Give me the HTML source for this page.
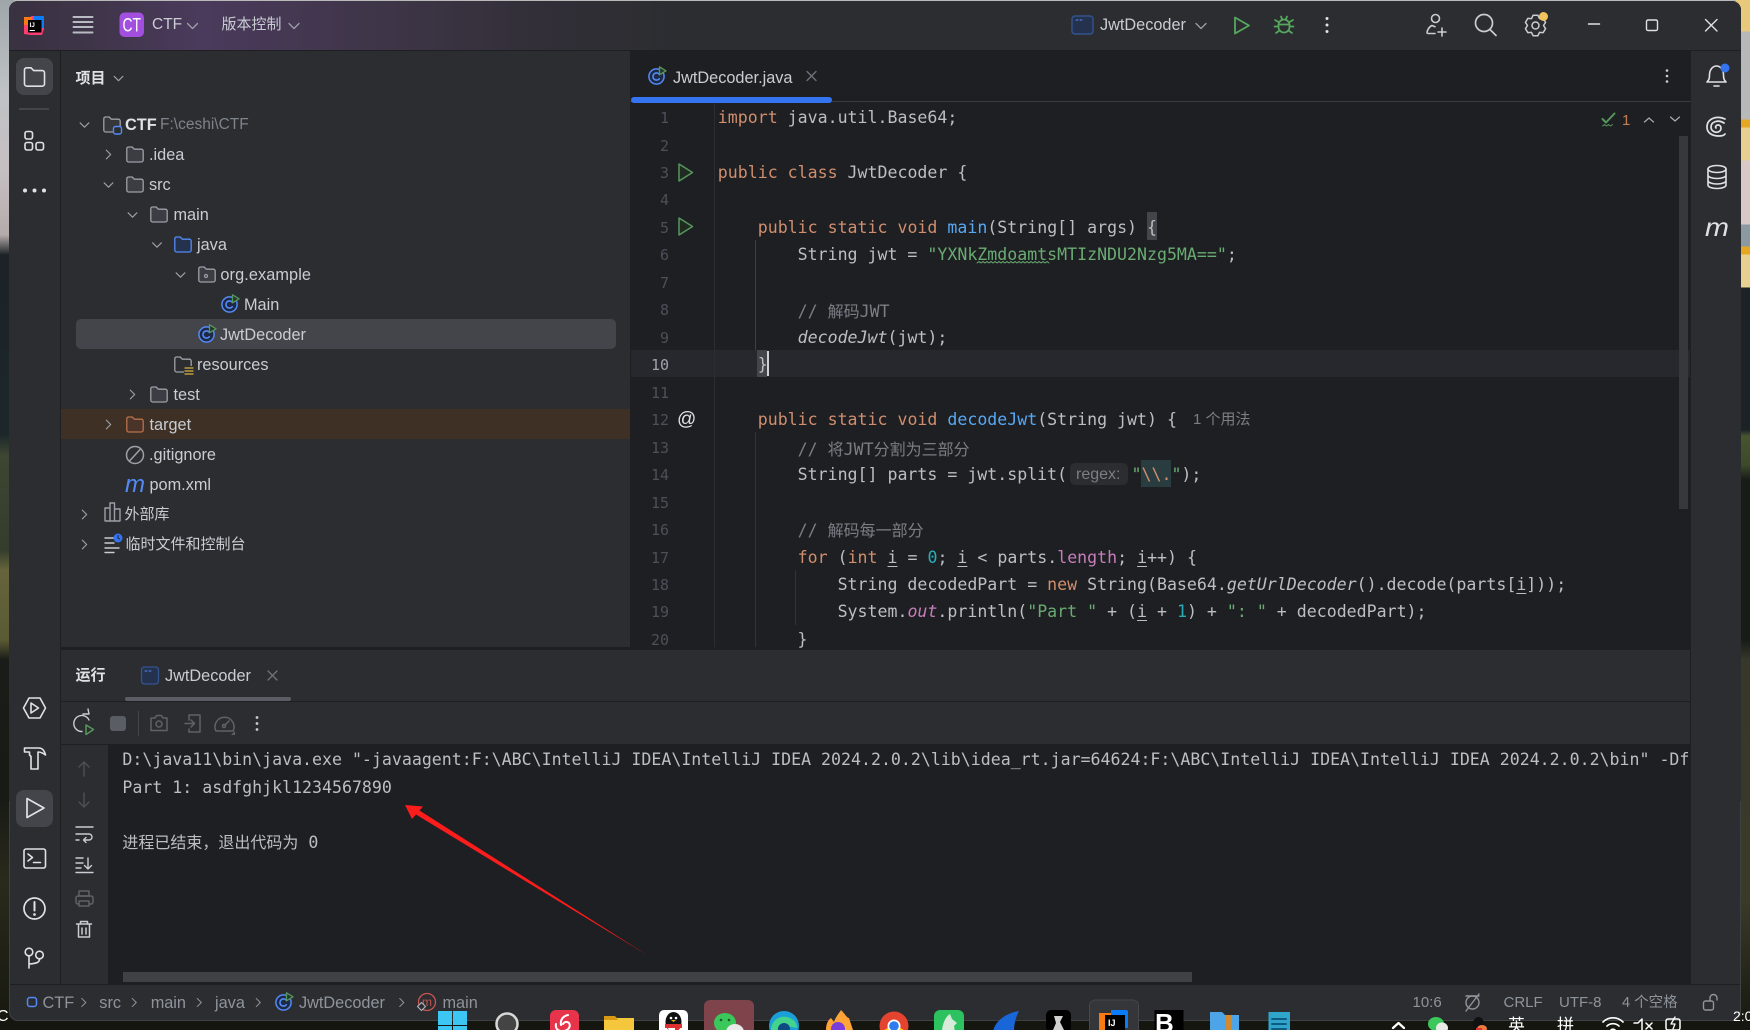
<!DOCTYPE html>
<html lang="zh"><head><meta charset="utf-8"><title>CTF</title>
<style>
html,body{margin:0;padding:0;width:1750px;height:1030px;overflow:hidden;background:#15160f}
body{position:relative;font-family:"Liberation Sans","Noto Sans CJK SC",sans-serif;color:#bcbec4}
.bg{position:absolute}
#win{position:absolute;left:0;top:0;width:1750px;height:1030px;clip-path:inset(1px 9px 9px 9px round 9px);background:#2b2d30}
.r{position:absolute}
.t{position:absolute;white-space:pre;line-height:22px;margin-top:-10.5px;font-size:16.3px;color:#c9ccd3}
.g{color:#7f838b}
.b{color:#8f949c}
.m{position:absolute;white-space:pre;line-height:24px;margin-top:-11px;font-family:"DejaVu Sans Mono","Liberation Mono","Noto Sans CJK SC",monospace;font-size:16.58px;color:#bcbec4}
.ln{position:absolute;left:629px;width:40px;text-align:right;line-height:22px;margin-top:-10px;font-family:"DejaVu Sans Mono","Liberation Mono",monospace;font-size:15px;color:#4b5059}
.k{color:#cf8e6d}.q{color:#6aab73}.c{color:#7a7e85}.f{color:#56a8f5}.n{color:#2aacb8}.p{color:#c77dbb}
.z{font-size:16px;font-family:"Noto Sans CJK SC",sans-serif}
i{font-style:italic}
u{text-decoration:underline;text-underline-offset:3px}
svg{position:absolute;left:0;top:0;overflow:visible}
</style></head><body>
<div class="bg" style="left:0;top:0;width:1750px;height:2px;background:#b9b9b9"></div>
<div class="bg" style="left:0;top:0;width:14px;height:1030px;background:linear-gradient(180deg,#9fa6aa 0,#bfc2c5 90px,#c6bfc2 170px,#b4abab 235px,#1c2226 255px,#1d272a 435px,#3d4632 455px,#343d2c 550px,#65643c 570px,#5a5a34 640px,#191c18 660px,#181a15 800px,#2a2a1c 880px,#16170f 1030px)"></div>
<div class="bg" style="left:1736px;top:0;width:14px;height:1030px;background:linear-gradient(180deg,#e8c87a 0,#e8c87a 31px,#b8b8b8 32px,#b8b8b8 119px,#e6a722 120px,#e6a722 127px,#e8d090 128px,#e8d090 160px,#d9c8c8 161px,#d9c8c8 224px,#8a9aa0 225px,#8a9aa0 246px,#e6a722 247px,#e6a722 254px,#e8d090 255px,#e8d090 287px,#1c2226 288px,#1c2226 430px,#46552e 436px,#3c4a2a 465px,#181c18 480px,#181c18 640px,#38382a 660px,#3a3a28 900px,#16170f 1030px)"></div>
<div class="bg" style="left:0;top:1018px;width:1750px;height:12px;background:#15160f"></div>

<div id="win">
<!-- panels -->
<div class="r" style="left:0;top:0;width:1750px;height:50px;background:linear-gradient(90deg,#38313f 0,#3f3549 90px,#4a3a5c 200px,#3d3546 400px,#302e36 560px,#2b2d30 700px)"></div>
<div class="r" style="left:0;top:50px;width:1750px;height:1px;background:#1e1f22"></div>
<div class="r" style="left:60px;top:51px;width:1px;height:934px;background:#1e1f22"></div>
<div class="r" style="left:630px;top:51px;width:1061px;height:597px;background:#1e1f22"></div>
<div class="r" style="left:60px;top:647px;width:1631px;height:3px;background:#1e1f22"></div>
<div class="r" style="left:1690px;top:51px;width:1px;height:934px;background:#1e1f22"></div>
<!-- tree selection -->
<div class="r" style="left:75.5px;top:319px;width:540px;height:30px;background:#43454a;border-radius:5px"></div>
<div class="r" style="left:61px;top:409px;width:569px;height:30px;background:#3e3024"></div>
<!-- left strip btn -->
<div class="r" style="left:15.5px;top:58px;width:37px;height:37px;background:#43454a;border-radius:8px"></div>
<div class="r" style="left:19px;top:107.5px;width:30px;height:2px;background:#43454a"></div>
<div class="r" style="left:15.5px;top:790px;width:37px;height:37px;background:#43454a;border-radius:8px"></div>
<!-- editor furniture -->
<div class="r" style="left:630px;top:101px;width:1061px;height:1px;background:#393b40"></div>
<div class="r" style="left:631px;top:97px;width:201px;height:6px;background:#3574f0;border-radius:3px"></div>
<div class="r" style="left:631px;top:350px;width:1059px;height:27px;background:#26282e"></div>
<div class="r" style="left:714px;top:103px;width:1px;height:544px;background:#2b2d30"></div>
<div class="r" style="left:755px;top:240px;width:1px;height:110px;background:#3f4146"></div>
<div class="r" style="left:755px;top:432px;width:1px;height:215px;background:#313338"></div>
<div class="r" style="left:795px;top:570px;width:1px;height:55px;background:#313338"></div>
<div class="r" style="left:1147px;top:212px;width:10px;height:28px;background:#43454a"></div>
<div class="r" style="left:757px;top:350px;width:10px;height:27px;background:#43454a"></div>
<div class="r" style="left:766.5px;top:351px;width:2px;height:25px;background:#ced0d6"></div>
<div class="r" style="left:1141px;top:460px;width:30px;height:27px;background:#293c40"></div>
<div class="r" style="left:1070px;top:463px;width:58px;height:22px;background:#2b2d30;border-radius:5px"></div>
<div class="r" style="left:1678.5px;top:136px;width:9.5px;height:373px;background:#37383b"></div>
<!-- run panel -->
<div class="r" style="left:61px;top:700.5px;width:1629px;height:1px;background:#1e1f22"></div>
<div class="r" style="left:125px;top:697px;width:166px;height:4px;background:#5a5d63;border-radius:2px"></div>
<div class="r" style="left:138px;top:711px;width:1px;height:25px;background:#43454a"></div>
<div class="r" style="left:61px;top:744px;width:1629px;height:1px;background:#1e1f22"></div>
<div class="r" style="left:108px;top:745px;width:1582px;height:239px;background:#1e1f22"></div>
<div class="r" style="left:123px;top:972px;width:1069px;height:10px;background:#404144"></div>
<div class="r" style="left:9px;top:984px;width:1732px;height:1px;background:#1e1f22"></div>
<div class="r" style="left:110px;top:716px;width:16px;height:15px;background:#5a5d63;border-radius:3px"></div>

<!-- title texts -->
<div class="t" style="left:152px;top:24.5px;font-size:15.5px">CTF</div>
<div class="t" style="left:221.5px;top:24.5px;font-size:15px">版本控制</div>
<div class="t" style="left:1100px;top:24.5px">JwtDecoder</div>
<div class="t" style="left:75.5px;top:78.5px;font-size:15px;font-weight:bold;color:#dfe1e5">项目</div>
<!-- tree -->
<div class="t" style="left:125px;top:124.7px;font-weight:bold;color:#dfe1e5">CTF</div>
<div class="t g" style="left:160px;top:124.7px;font-size:15.5px">F:\ceshi\CTF</div>
<div class="t" style="left:149px;top:154.7px">.idea</div>
<div class="t" style="left:149px;top:184.7px">src</div>
<div class="t" style="left:173.5px;top:214.7px">main</div>
<div class="t" style="left:197px;top:244.7px">java</div>
<div class="t" style="left:220.4px;top:274.7px;letter-spacing:.1px">org.example</div>
<div class="t" style="left:244px;top:304.7px">Main</div>
<div class="t" style="left:220px;top:334.7px">JwtDecoder</div>
<div class="t" style="left:197px;top:364.7px">resources</div>
<div class="t" style="left:173.5px;top:394.7px">test</div>
<div class="t" style="left:149.5px;top:424.7px">target</div>
<div class="t" style="left:149px;top:454.7px">.gitignore</div>
<div class="t" style="left:149.5px;top:484.7px">pom.xml</div>
<div class="t" style="left:124.5px;top:514.5px;font-size:15px">外部库</div>
<div class="t" style="left:125.5px;top:544.5px;font-size:15px">临时文件和控制台</div>
<!-- tab -->
<div class="t" style="left:673px;top:77.5px">JwtDecoder.java</div>
<div class="t" style="left:75.5px;top:675.5px;font-size:15px;font-weight:bold;color:#dfe1e5">运行</div>
<div class="t" style="left:165px;top:675.5px">JwtDecoder</div>

<!-- line numbers -->
<div class="ln" style="top:117px">1</div><div class="ln" style="top:144.5px">2</div><div class="ln" style="top:172px">3</div><div class="ln" style="top:199.4px">4</div><div class="ln" style="top:226.9px">5</div><div class="ln" style="top:254.4px">6</div><div class="ln" style="top:281.8px">7</div><div class="ln" style="top:309.3px">8</div><div class="ln" style="top:336.8px">9</div><div class="ln" style="top:364.2px;color:#a1a3ab">10</div><div class="ln" style="top:391.7px">11</div><div class="ln" style="top:419.2px">12</div><div class="ln" style="top:446.6px">13</div><div class="ln" style="top:474.1px">14</div><div class="ln" style="top:501.6px">15</div><div class="ln" style="top:529px">16</div><div class="ln" style="top:556.5px">17</div><div class="ln" style="top:584px">18</div><div class="ln" style="top:611.4px">19</div>
<div class="r" style="left:630px;top:101px;width:1061px;height:547px;overflow:hidden">
<div class="ln" style="left:-1px;top:538.3px">20</div>
<div class="m" style="left:127.5px;top:538.3px"><span style="visibility:hidden">    </span>}</div>
</div>
<!-- code -->
<div class="m" style="left:717.8px;top:117px"><span class="k">import</span> java.util.Base64;</div>
<div class="m" style="left:717.8px;top:172px"><span class="k">public class</span> JwtDecoder {</div>
<div class="m" style="left:717.8px;top:226.9px">    <span class="k">public static void</span> <span class="f">main</span>(String[] args) {</div>
<div class="m" style="left:717.8px;top:254.4px">        String jwt = <span class="q">"YXNkZmdoamtsMTIzNDU2Nzg5MA=="</span>;</div>
<div class="m c" style="left:717.8px;top:308.5px">        // <span class="z">解码</span>JWT</div>
<div class="m" style="left:717.8px;top:336.8px">        <i>decodeJwt</i>(jwt);</div>
<div class="m" style="left:717.8px;top:364.2px">    }</div>
<div class="m" style="left:717.8px;top:419.2px">    <span class="k">public static void</span> <span class="f">decodeJwt</span>(String jwt) {</div>
<div class="t c" style="left:1193px;top:419.2px;font-size:15px;color:#7a7e85">1 个用法</div>
<div class="m c" style="left:717.8px;top:446.6px">        // <span class="z">将</span>JWT<span class="z">分割为三部分</span></div>
<div class="m" style="left:717.8px;top:474.1px">        String[] parts = jwt.split(</div>
<div class="t" style="left:1076px;top:474.1px;font-size:16px;color:#7a7e85">regex:</div>
<div class="m" style="left:1131.5px;top:474.1px"><span class="q">"</span><span class="k">\\.</span><span class="q">"</span>);</div>
<div class="m c" style="left:717.8px;top:528px">        // <span class="z">解码每一部分</span></div>
<div class="m" style="left:717.8px;top:556.5px">        <span class="k">for</span> (<span class="k">int</span> <u>i</u> = <span class="n">0</span>; <u>i</u> &lt; parts.<span class="p">length</span>; <u>i</u>++) {</div>
<div class="m" style="left:717.8px;top:584px">            String decodedPart = <span class="k">new</span> String(Base64.<i>getUrlDecoder</i>().decode(parts[<u>i</u>]));</div>
<div class="m" style="left:717.8px;top:611.4px">            System.<i class="p">out</i>.println(<span class="q">"Part "</span> + (<u>i</u> + <span class="n">1</span>) + <span class="q">": "</span> + decodedPart);</div>
<!-- console -->
<div class="r" style="left:108px;top:745px;width:1582px;height:120px;overflow:hidden">
<div class="m" style="left:14.4px;top:13.5px">D:\java11\bin\java.exe "-javaagent:F:\ABC\IntelliJ IDEA\IntelliJ IDEA 2024.2.0.2\lib\idea_rt.jar=64624:F:\ABC\IntelliJ IDEA\IntelliJ IDEA 2024.2.0.2\bin" -Dfile.encoding=UTF-8</div>
<div class="m" style="left:14.4px;top:42px">Part 1: asdfghjkl1234567890</div>
<div class="m" style="left:14.4px;top:95.3px"><span class="z">进程已结束，退出代码为</span> 0</div>
</div>
<!-- status -->
<div class="t b" style="left:42.5px;top:1002.7px">CTF</div>
<div class="t b" style="left:99.3px;top:1002.7px">src</div>
<div class="t b" style="left:150.7px;top:1002.7px">main</div>
<div class="t b" style="left:215px;top:1002.7px">java</div>
<div class="t b" style="left:299px;top:1002.7px">JwtDecoder</div>
<div class="t b" style="left:442.5px;top:1002.7px">main</div>
<div class="t b" style="left:1412.5px;top:1002.7px;font-size:15px">10:6</div>
<div class="t b" style="left:1503.5px;top:1002.7px;font-size:15px">CRLF</div>
<div class="t b" style="left:1559px;top:1002.7px;font-size:15px">UTF-8</div>
<div class="t b" style="left:1622px;top:1002.7px;font-size:14.5px">4 个空格</div>
</div>
<div class="bg" style="left:9px;top:1px;width:1730px;height:1018px;border:1px solid #3f4145;border-radius:9px;clip-path:inset(800px 0 0 0)"></div>

<svg width="1750" height="1030" viewBox="0 0 1750 1030" fill="none" stroke-linecap="round" stroke-linejoin="round">
<defs>
<symbol id="fold" viewBox="0 0 18 18" overflow="visible"><path d="M.8 3.2A1.7 1.7 0 0 1 2.5 1.5h3.7l2.1 2.2h7a1.9 1.9 0 0 1 1.9 1.9v9a1.9 1.9 0 0 1-1.9 1.9H2.7a1.9 1.9 0 0 1-1.9-1.9z" stroke-width="1.3"/></symbol>
<symbol id="cls" viewBox="0 0 19 19" overflow="visible"><circle cx="8.5" cy="10.5" r="7.6" stroke="#548af7" stroke-width="1.5" fill="#1e2a45"/><path d="M11.3 8.2a3.6 3.6 0 1 0 0 4.6" stroke="#548af7" stroke-width="1.6" fill="none"/><path d="M11.5 .8l6.5 4-6.5 4z" stroke="#57965c" stroke-width="1.3" fill="#24372a"/></symbol>
<symbol id="cd" viewBox="0 0 12 8" overflow="visible"><path d="M1 1.5l5 5 5-5" stroke-width="1.3" fill="none"/></symbol>
<symbol id="cr" viewBox="0 0 8 12" overflow="visible"><path d="M1.5 1l5 5-5 5" stroke-width="1.3" fill="none"/></symbol>
</defs>

<!-- titlebar -->
<g>
<path d="M24 17h6l2-1h11l1 1v12l-2 6h-11l-7-1z" fill="#ff3d6e" stroke="none"/>
<path d="M24 17h8v8h-8z" fill="#f97a12" stroke="none"/>
<path d="M34 16h9a1 1 0 0 1 1 1v11h-10z" fill="#087cfa" stroke="none"/>
<rect x="28" y="20" width="13.5" height="12.5" fill="#000" stroke="none"/>
<text x="29.5" y="27" font-family="Liberation Sans" font-size="6.5" font-weight="bold" fill="#fff">IJ</text>
<path d="M30 30.5h4.5" stroke="#fff" stroke-width="1"/>
</g>
<path d="M73.5 17h19M73.5 22h19M73.5 27h19M73.5 32.5h19" stroke="#b8bbc2" stroke-width="2"/>
<rect x="119.5" y="12.5" width="24.5" height="24.5" rx="5" fill="#a24fe0" stroke="none"/>
<text x="122.5" y="31.5" font-family="Liberation Sans" font-size="19" fill="#fff" textLength="18.5" lengthAdjust="spacingAndGlyphs">CT</text>
<use href="#cd" x="186.500" y="22" width="12" height="8" stroke="#9da0a8"/>
<use href="#cd" x="288" y="22" width="12" height="8" stroke="#9da0a8"/>
<rect x="1072" y="16" width="21" height="18" rx="3" fill="#25324d" stroke="#35538f" stroke-width="1.4"/>
<path d="M1076 20h2M1080 20h2" stroke="#548af7" stroke-width="1"/>
<use href="#cd" x="1195" y="22" width="12" height="8" stroke="#9da0a8"/>
<path d="M1235 17.500l14 8-14 8z" stroke="#57a85f" stroke-width="1.800"/>
<g stroke="#57a85f" stroke-width="1.700"><rect x="1278.500" y="19.500" width="11" height="13" rx="5.500"/><path d="M1278.500 24.500h11M1281 16.500l1 2.500M1287 16.500l-1 2.500M1278.500 22l-3.500-2M1289.500 22l3.500-2M1278.500 26.500h-4M1289.500 26.500h4M1279.500 30.500l-3.500 2.500M1288.500 30.500l3.500 2.500"/></g>
<g fill="#dfe1e5" stroke="none"><circle cx="1327" cy="18.500" r="1.500"/><circle cx="1327" cy="25" r="1.500"/><circle cx="1327" cy="31.500" r="1.500"/></g>
<g stroke="#c9ccd3" stroke-width="1.600"><circle cx="1435.500" cy="18.500" r="4"/><path d="M1427 33c0-2 1.500-6 5-7.500l3 1.200M1428 33.500h7M1442 28v8M1438 32h8"/></g>
<g stroke="#c9ccd3" stroke-width="1.700"><circle cx="1484" cy="23" r="8.500"/><path d="M1490 29.500l6 6"/></g>
<g stroke="#c9ccd3" stroke-width="1.500" transform="translate(1535.500 25.500)"><path d="M-2.360-10.230L2.360-10.230 4-6.930 7.680-7.160 10.040-3.070 8 0 10.040 3.070 7.680 7.160 4 6.930 2.360 10.230-2.360 10.230-4 6.930-7.680 7.160-10.040 3.070-8 0-10.040-3.070-7.680-7.160-4-6.930z"/><circle cx="0" cy="0" r="3.500"/></g>
<circle cx="1543.500" cy="16.500" r="4.500" fill="#f2c55c" stroke="none"/>
<path d="M1588.500 24h11" stroke="#dfe1e5" stroke-width="1.500"/>
<rect x="1646.500" y="20" width="11" height="10.500" rx="1.500" stroke="#dfe1e5" stroke-width="1.400"/>
<path d="M1705.500 19.500l11.500 11.500M1717 19.500l-11.500 11.500" stroke="#dfe1e5" stroke-width="1.400"/>

<!-- left strip -->
<use href="#fold" x="23" y="66" width="23" height="22" fill="none" stroke="#dfe1e5"/>
<g stroke="#dfe1e5" stroke-width="1.600"><rect x="25" y="131.500" width="7.500" height="7.500" rx="2"/><rect x="25" y="142.500" width="7.500" height="7.500" rx="2"/><rect x="36" y="142.500" width="7.500" height="7.500" rx="2"/></g>
<g fill="#dfe1e5" stroke="none"><circle cx="25" cy="190.500" r="2"/><circle cx="34.500" cy="190.500" r="2"/><circle cx="44" cy="190.500" r="2"/></g>
<g stroke="#dfe1e5" stroke-width="1.600"><path d="M29 698h11l5.500 10-5.500 10H29l-5.500-10z"/><path d="M31 703l7.500 5-7.500 5z"/></g>
<path d="M24.500 748H39c3.500 0 5.500 3 6.500 7-2.500-2-5-3-7.500-3V769h-7V756.500l-1.500-1.500V752h-5z" stroke="#dfe1e5" stroke-width="1.600"/>
<path d="M27 798.500l17 9.500-17 9.500z" stroke="#dfe1e5" stroke-width="1.700"/>
<g stroke="#dfe1e5" stroke-width="1.600"><rect x="24" y="849" width="21.500" height="19" rx="2"/><path d="M28 854l4.500 3.500-4.500 3.500M33.500 862.500h7"/></g>
<g stroke="#dfe1e5" stroke-width="1.700"><circle cx="34.500" cy="908.500" r="10.500"/><path d="M34.500 902v8.500" stroke-width="2"/><circle cx="34.500" cy="914.500" r=".6" stroke-width="1.500"/></g>
<g stroke="#dfe1e5" stroke-width="1.600"><circle cx="29" cy="952" r="3.800"/><circle cx="39.500" cy="955" r="3.800"/><path d="M29 956v12M39.500 959c0 3.500-3 4.500-10.500 5"/></g>

<!-- tree icons -->
<use href="#cd" x="79" y="121.500" width="11" height="7" stroke="#9da0a8"/>
<use href="#fold" x="103" y="115.500" width="18" height="18" fill="#35373b" stroke="#9da0a8"/>
<rect x="113.500" y="126.500" width="8" height="7.500" rx="2" fill="#2b2d30" stroke="#548af7" stroke-width="1.400"/>
<use href="#cr" x="105" y="149" width="7" height="11" stroke="#9da0a8"/>
<use href="#fold" x="126" y="145.500" width="18" height="18" fill="#3b3d42" stroke="#9da0a8"/>
<use href="#cd" x="103" y="181.500" width="11" height="7" stroke="#9da0a8"/>
<use href="#fold" x="126" y="175.500" width="18" height="18" fill="#3b3d42" stroke="#9da0a8"/>
<use href="#cd" x="127" y="211.500" width="11" height="7" stroke="#9da0a8"/>
<use href="#fold" x="150" y="205.500" width="18" height="18" fill="#3b3d42" stroke="#9da0a8"/>
<use href="#cd" x="151.500" y="241.500" width="11" height="7" stroke="#9da0a8"/>
<use href="#fold" x="174" y="235.500" width="18" height="18" fill="#25324d" stroke="#548af7"/>
<use href="#cd" x="175" y="271.500" width="11" height="7" stroke="#9da0a8"/>
<use href="#fold" x="198" y="265.500" width="18" height="18" fill="#3b3d42" stroke="#9da0a8"/>
<circle cx="206" cy="276" r="1.500" stroke="#9da0a8" stroke-width="1.200"/>
<use href="#cls" x="221" y="294" width="19" height="19"/>
<use href="#cls" x="198" y="324" width="19" height="19"/>
<use href="#fold" x="174" y="355.500" width="18" height="18" fill="none" stroke="#9da0a8"/>
<rect x="184" y="366" width="9" height="9" fill="#2b2d30" stroke="none"/>
<path d="M185 368h8M185 371h8M185 374h8" stroke="#d5b340" stroke-width="1.300"/>
<use href="#cr" x="129" y="389" width="7" height="11" stroke="#9da0a8"/>
<use href="#fold" x="150" y="385.500" width="18" height="18" fill="#3b3d42" stroke="#9da0a8"/>
<use href="#cr" x="105" y="419" width="7" height="11" stroke="#9da0a8"/>
<use href="#fold" x="126" y="415.500" width="18" height="18" fill="#4a3328" stroke="#b9714a"/>
<g stroke="#9da0a8" stroke-width="1.500"><circle cx="135" cy="455" r="8.500"/><path d="M129.500 461l11-12"/></g>
<text x="125" y="492" font-family="Liberation Sans" font-size="24" font-style="italic" fill="#548af7" textLength="20" lengthAdjust="spacingAndGlyphs">m</text>
<use href="#cr" x="81" y="509" width="7" height="11" stroke="#9da0a8"/>
<g stroke="#9da0a8" stroke-width="1.400"><path d="M105 508h5v13h-5zM110 503h4.500v18H110zM114.500 509h5.500v12h-5.500z"/></g>
<use href="#cr" x="81" y="539" width="7" height="11" stroke="#9da0a8"/>
<path d="M105 538h9M105 543h9M105 548h14M105 552.500h9" stroke="#c9ccd3" stroke-width="1.400"/>
<circle cx="118" cy="538" r="4.500" fill="#3574f0" stroke="none"/>
<path d="M118 535.500v2.500l1.500 1" stroke="#1e1f22" stroke-width="1"/>
<use href="#cd" x="113" y="75" width="11" height="7" stroke="#9da0a8"/>

<!-- tab icons -->
<use href="#cls" x="648" y="66" width="19" height="19"/>
<path d="M807 71.500l9 9M816 71.500l-9 9" stroke="#6f737a" stroke-width="1.300"/>
<g fill="#c9ccd3" stroke="none"><circle cx="1667" cy="70.500" r="1.300"/><circle cx="1667" cy="76" r="1.300"/><circle cx="1667" cy="81.500" r="1.300"/></g>
<path d="M1602.500 119l3.500 3.500 8.500-9" stroke="#57965c" stroke-width="2"/>
<path d="M1602.500 126l2-1.500 2 1.500 2-1.500 2 1.500 2-1.500" stroke="#57965c" stroke-width="1"/>
<text x="1622" y="125" font-family="Liberation Sans" font-size="15" fill="#c77d55">1</text>
<path d="M1644.500 122l4.500-4 4.500 4M1670.500 117l4.500 4 4.500-4" stroke="#a8abb2" stroke-width="1.200"/>
<!-- gutter -->
<path d="M679 164l13.500 8.500-13.500 8.500z" stroke="#57965c" stroke-width="1.500" fill="#1f2a21"/>
<path d="M679 218l13.500 8.500-13.500 8.500z" stroke="#57965c" stroke-width="1.500" fill="#1f2a21"/>
<text x="677" y="425" font-family="Liberation Sans" font-size="19" fill="#dfe1e5">@</text>
<path d="M977 263l2-1.500 2 1.500 2-1.500 2 1.500 2-1.500 2 1.500 2-1.500 2 1.500 2-1.500 2 1.500 2-1.500 2 1.500 2-1.500 2 1.500 2-1.500 2 1.500 2-1.500 2 1.500 2-1.500 2 1.500 2-1.500 2 1.500 2-1.500 2 1.500 2-1.500 2 1.500 2-1.500 2 1.500 2-1.500 2 1.500 2-1.500 2 1.500 2-1.500 2 1.500 2-1.500 2 1.500" stroke="#6aab73" stroke-width=".9"/>
<!-- right strip -->
<g stroke="#dfe1e5" stroke-width="1.600"><path d="M1707 82c2-2 2.500-3.500 2.500-7 0-5 3-9 7-9s7 4 7 9c0 3.500.5 5 2.500 7z"/><path d="M1714 86h5"/></g>
<circle cx="1725" cy="68" r="4.500" fill="#3574f0" stroke="none"/>
<g stroke="#dfe1e5" stroke-width="1.700"><path d="M1725 119C1716 115 1707 119 1707 127 1707 133 1712 136 1719 136 1721 136 1724 135.500 1725 134"/><path d="M1724 123C1718 119 1711 122 1711 127 1711 131 1715 133 1718 132 1722 131 1722 125 1718 125 1716 125 1715 127 1716 128"/></g>
<g stroke="#dfe1e5" stroke-width="1.600"><ellipse cx="1717" cy="169" rx="9" ry="3.500"/><path d="M1708 169v16c0 2 4 3.500 9 3.500s9-1.500 9-3.500v-16M1708 175c0 2 4 3.500 9 3.500s9-1.500 9-3.500M1708 180.500c0 2 4 3.500 9 3.500s9-1.500 9-3.500"/></g>
<text x="1705" y="236" font-family="Liberation Sans" font-size="26" font-style="italic" fill="#dfe1e5" textLength="24" lengthAdjust="spacingAndGlyphs">m</text>
<!-- run panel -->
<rect x="141.500" y="667" width="17" height="17" rx="3" fill="#25324d" stroke="#35538f" stroke-width="1.300"/>
<path d="M145 671h2M149 671h2" stroke="#548af7" stroke-width="1"/>
<path d="M268 671l9 9M277 671l-9 9" stroke="#6f737a" stroke-width="1.300"/>
<g stroke="#c9ccd3" stroke-width="1.400"><path d="M89 720a8 8 0 1 0-7 11.500M83 714l6 0-1-5"/></g>
<path d="M86 725l7.500 4.500-7.500 5z" stroke="#57965c" stroke-width="1.500"/>
<g stroke="#5f6268" stroke-width="1.500"><path d="M151 718h4l1.500-2.500h5l1.500 2.500h4v12.500h-16z"/><circle cx="159" cy="724" r="3"/></g>
<g stroke="#5f6268" stroke-width="1.500"><path d="M189 715h11v17h-11v-3M189 720v-5M185 723.500h9M191 720l3.500 3.500-3.500 3.500"/></g>
<g stroke="#5f6268" stroke-width="1.500"><path d="M216 731a9.500 9.500 0 1 1 17 0z"/><circle cx="224" cy="726" r="1.500"/><path d="M225 725l4-4"/></g>
<path d="M231 735h4v-4z" fill="#5f6268" stroke="none"/>
<g fill="#c9ccd3" stroke="none"><circle cx="257" cy="717.500" r="1.400"/><circle cx="257" cy="723.500" r="1.400"/><circle cx="257" cy="729.500" r="1.400"/></g>
<!-- console gutter -->
<path d="M84 762v14M79 767l5-5 5 5" stroke="#4b4e54" stroke-width="1.500"/>
<path d="M84 793v14M79 802l5 5 5-5" stroke="#4b4e54" stroke-width="1.500"/>
<g stroke="#c9ccd3" stroke-width="1.400"><path d="M76 827h17M76 834h13a3 3 0 0 1 0 6h-5M86 837.500l-2.500 2.500 2.500 2.500M76 840h3"/></g>
<g stroke="#c9ccd3" stroke-width="1.400"><path d="M76 858h7M76 863h7M76 868h5M88 858v11M84.500 865.500l3.500 3.500 3.500-3.500M76 872.500h17"/></g>
<g stroke="#5f6268" stroke-width="1.500"><rect x="79" y="891" width="10" height="5"/><rect x="76" y="896" width="17" height="8" rx="2"/><rect x="79" y="901" width="10" height="5" fill="#2b2d30"/></g>
<g stroke="#c9ccd3" stroke-width="1.500"><path d="M76.500 924h15M80.500 924v-2.500h7v2.500M78.500 924v13h11v-13M82 928v6M86 928v6"/></g>
<!-- status -->
<rect x="27.500" y="997.500" width="9" height="9" rx="2.500" stroke="#548af7" stroke-width="1.500"/>
<g stroke="#8f949c"><use href="#cr" x="80.500" y="997" width="6.500" height="11"/><use href="#cr" x="131" y="997" width="6.500" height="11"/><use href="#cr" x="196" y="997" width="6.500" height="11"/><use href="#cr" x="255" y="997" width="6.500" height="11"/><use href="#cr" x="398.500" y="997" width="6.500" height="11"/></g>
<use href="#cls" x="275" y="992" width="19" height="19"/>
<circle cx="427" cy="1002" r="8.500" stroke="#c75450" stroke-width="1.300"/>
<text x="427" y="1006" text-anchor="middle" font-family="Liberation Sans" font-size="12" fill="#c75450">m</text>
<path d="M421.500 1002.500l4 4-4 4-4-4z" fill="#2b2d30" stroke="#b0b3ba" stroke-width="1.200"/>
<g stroke="#8f949c" stroke-width="1.400"><circle cx="1472.500" cy="1002.500" r="6.500"/><path d="M1466 1011l13-17M1466 996h13"/></g>
<g stroke="#8f949c" stroke-width="1.400"><rect x="1703.500" y="1001" width="10" height="9" rx="2"/><path d="M1710 1001v-3a3.500 3.500 0 0 1 7 0v2"/></g>

<!-- red arrow -->
<path d="M405 805L423 806.500 419.500 810.500 647 955 416 814.500 412 819z" fill="#fb1c1c" stroke="none"/>

<!-- taskbar icons -->
<g stroke="none">
<path d="M438 1011h14v14h-14zM453 1011h14v14h-14zM438 1026h14v6h-14zM453 1026h14v6h-14z" fill="#3cc6f4"/>
<circle cx="507" cy="1024" r="10.500" fill="#444" stroke="#d8d8d8" stroke-width="2.500"/>
<rect x="550" y="1010" width="29" height="30" rx="6" fill="#e8344a"/>
<path d="M568 1015c-5 1-8 5-7 10M556 1024c-1 5 3 8 8 7 5-1 7-5 5-8-2-2-5-1-6 1" stroke="#fff" stroke-width="2" fill="none"/>
<path d="M604 1018a2 2 0 0 1 2-2h8l3 2h17v18h-30z" fill="#f5c73c"/>
<path d="M604 1016h11l3 4h-14z" fill="#d89a14"/>
<rect x="659" y="1010" width="29" height="30" rx="5" fill="#fff"/>
<ellipse cx="673.500" cy="1022" rx="8" ry="10" fill="#111"/>
<ellipse cx="673.500" cy="1028" rx="5.500" ry="4" fill="#fff"/>
<circle cx="671" cy="1018" r="1.300" fill="#fff"/><circle cx="676" cy="1018" r="1.300" fill="#fff"/>
<path d="M671 1020h5l-2.500 2z" fill="#f5b400"/>
<path d="M665 1024h17v4h-3v4h-4v-4h-10z" fill="#e02f2f"/>
<path d="M704 1006a6 6 0 0 1 6-6h38a6 6 0 0 1 6 6v28h-50z" fill="#7f444b"/>
<ellipse cx="725" cy="1023" rx="11" ry="10" fill="#3bc85a"/>
<circle cx="721" cy="1020" r="1.300" fill="#1e5a2c"/><circle cx="729" cy="1020" r="1.300" fill="#1e5a2c"/>
<ellipse cx="735" cy="1032" rx="9" ry="8" fill="#eaeaea"/>
<circle cx="784" cy="1026" r="15" fill="#1b9fd8"/>
<path d="M771 1030c0-10 10-16 19-12 5 2 7 6 7 10l-10-2c-6-1-10 1-10 8z" fill="#43d38d"/>
<circle cx="784" cy="1029" r="6" fill="#114a80"/>
<path d="M826 1030c0-6 2-10 5-12l3 4c2-6 6-10 7-12 4 4 6 8 8 8l4 12z" fill="#ffa436"/>
<circle cx="838" cy="1029" r="7" fill="#7a3ddb"/>
<circle cx="894" cy="1026" r="14.500" fill="#e4432f"/>
<path d="M881 1032l13-8 13 8v8h-26z" fill="#fdd000"/>
<circle cx="894" cy="1026" r="6.500" fill="#fff"/><circle cx="894" cy="1026" r="4.800" fill="#2e7cf0"/>
<rect x="934" y="1010" width="30" height="30" rx="6" fill="#2cc25f"/>
<path d="M942 1032c0-8 4-16 8-18l2 5 5 4-3 3 1 6z" fill="#d8ead9"/>
<path d="M993 1032c1-8 9-18 26-21-3 6-5 12-5 21z" fill="#1866d8"/>
<path d="M1050 1014h19v14h-19z" fill="#000"/><rect x="1046" y="1010" width="25" height="22" rx="5" fill="#000"/>
<path d="M1054 1016h9l-3 6 4 8h-11l3-7z" fill="#d0d0d0"/>
<path d="M1089.500 1006a6 6 0 0 1 6-6h37a6 6 0 0 1 6 6v28h-49z" fill="#34363a" stroke="#45474b" stroke-width="1"/>
<path d="M1099 1013h17v20h-17z" fill="#f97a12"/><path d="M1111 1010h15a2 2 0 0 1 2 2v16h-17z" fill="#087cfa"/><rect x="1105" y="1015" width="20" height="17" fill="#000"/>
<text x="1108" y="1026" font-family="Liberation Sans" font-size="9" font-weight="bold" fill="#fff">IJ</text>
<rect x="1154.500" y="1010" width="29" height="22" fill="#000"/>
<text x="1155" y="1032" font-family="Liberation Sans" font-size="26" font-weight="bold" fill="#fff">B</text>
<path d="M1210 1012h12l3 3h14v17h-29z" fill="#4da5e8"/><path d="M1226 1015h5v17h-5z" fill="#d08a30"/>
<rect x="1268.500" y="1012" width="21.500" height="20" fill="#2fa5cc"/>
<path d="M1272 1019h14M1272 1024h14M1272 1029h14" stroke="#0f5a80" stroke-width="2"/>
<path d="M1393 1028l5.500-5 5.500 5" stroke="#fff" stroke-width="2.200"/>
<ellipse cx="1436" cy="1024" rx="8" ry="7" fill="#3bc85a"/><ellipse cx="1442" cy="1028" rx="6" ry="5.500" fill="#eaeaea"/>
<ellipse cx="1478.500" cy="1024" rx="5.500" ry="7" fill="#111"/><ellipse cx="1482" cy="1029" rx="5" ry="4" fill="#ee7b40"/>
<path d="M1476 1028h6v3h-6z" fill="#e02f2f"/>
<path d="M1603 1022a14 14 0 0 1 20 0M1607 1026a9 9 0 0 1 12 0M1611 1030a3 3 0 0 1 4 0" stroke="#fff" stroke-width="1.700" fill="none"/>
<path d="M1634 1023h4l4-4v12M1646 1023l6 6M1652 1023l-6 6" stroke="#fff" stroke-width="1.500" fill="none"/>
<rect x="1666" y="1019" width="14" height="11" rx="2" stroke="#fff" stroke-width="1.500" fill="none"/><path d="M1675 1017l-4 7h4l-2 5" stroke="#fff" stroke-width="1.300" fill="none"/>
</g>
<text x="1516.500" y="1031" text-anchor="middle" font-family="Noto Sans CJK SC" font-size="17" fill="#fff">英</text>
<text x="1565.500" y="1031" text-anchor="middle" font-family="Noto Sans CJK SC" font-size="17" fill="#fff">拼</text>
<text x="1733" y="1021" font-family="Liberation Sans" font-size="14" fill="#fff">2:0</text>
<text x="-3" y="1021" font-family="Liberation Sans" font-size="16" fill="#fff">C</text>
</svg>
</body></html>
